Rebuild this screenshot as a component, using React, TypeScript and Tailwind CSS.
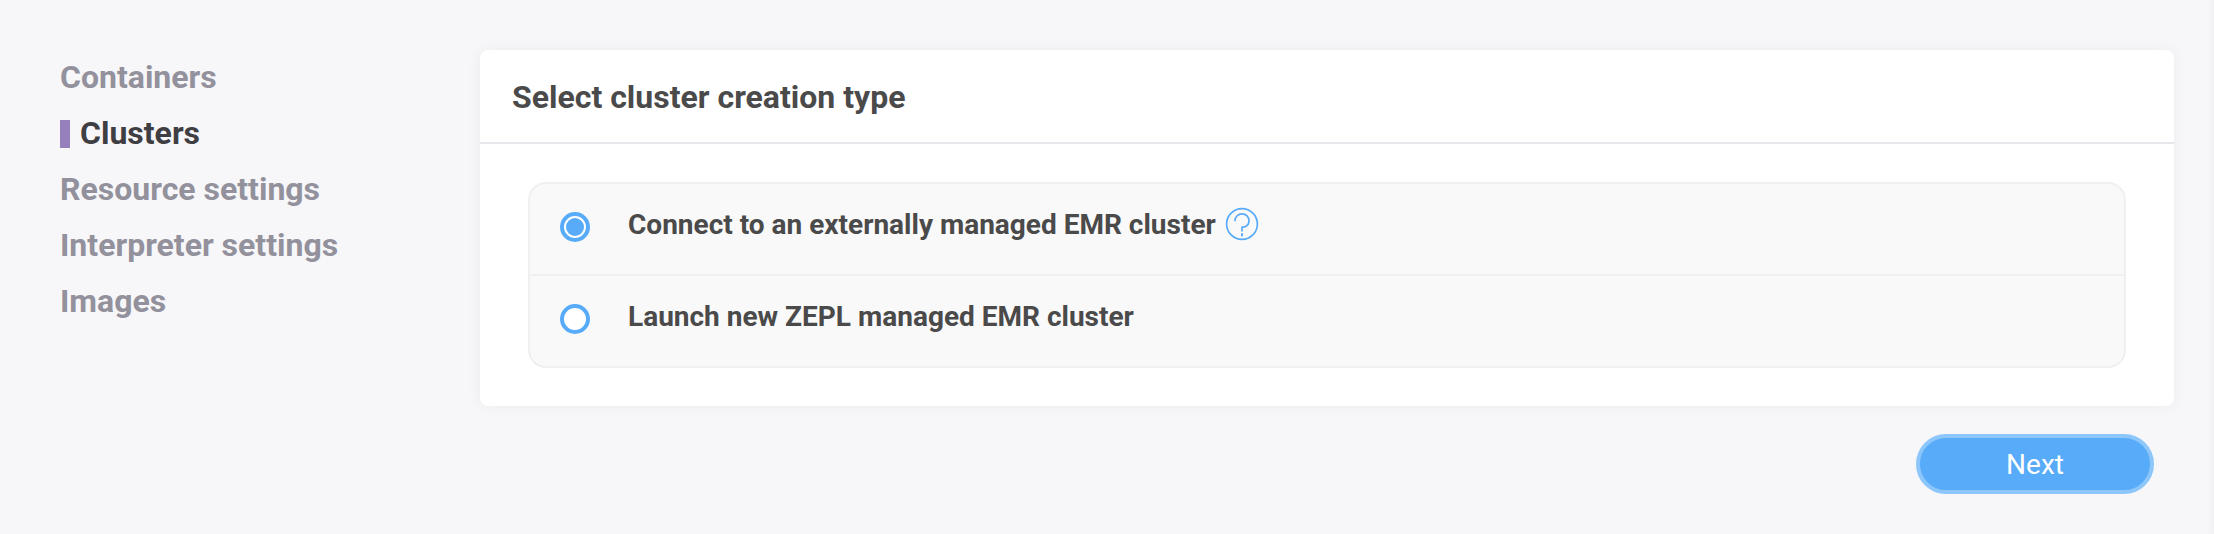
import { useState } from "react";

const navItems = ["Containers", "Clusters", "Resource settings", "Interpreter settings", "Images"];

const options = [
  { label: "Connect to an externally managed EMR cluster", help: true },
  { label: "Launch new ZEPL managed EMR cluster", help: false },
];

function HelpIcon() {
  return (
    <svg width="34" height="34" viewBox="0 0 34 34" fill="none" stroke="#57abf8" className="-mt-0.5 shrink-0">
      <circle cx="17" cy="17" r="15.4" strokeWidth="1.7" />
      <path d="M10 14.2V13.6a7 6.9 0 0 1 14 0.2c0 3.6-2.6 6.2-7 6.6v4" strokeWidth="1.7" />
      <path d="M17 26.2v3" strokeWidth="2" />
    </svg>
  );
}

export default function App() {
  const [active, setActive] = useState("Clusters");
  const [selected, setSelected] = useState(0);

  return (
    <div className="flex h-[534px] w-[2214px] overflow-hidden bg-[#f7f7fa] font-['Roboto',sans-serif]">
      <nav className="w-[480px] shrink-0 pt-[49px] pl-[60px]">
        <ul>
          {navItems.map((item) => (
            <li
              key={item}
              onClick={() => setActive(item)}
              className={
                item === active
                  ? "flex h-14 cursor-pointer items-center text-[32px] font-bold text-[#3f3e42]"
                  : "flex h-14 cursor-pointer items-center text-[32px] font-bold text-[#92919c]"
              }
            >
              {item === active && <span className="mt-0.5 mr-2.5 h-7 w-2.5 bg-[#9580bb]" />}
              {item}
            </li>
          ))}
        </ul>
      </nav>
      <main className="w-[1694px] shrink-0 pt-[50px]">
        <section className="h-[356px] rounded-lg bg-white shadow-[0_0_16px_rgba(0,0,0,0.05)]">
          <header className="flex h-[94px] items-center border-b-2 border-[#e6e6eb] pt-0.5 pl-8">
            <h1 className="text-[32px] font-bold text-[#4a4a4a]">Select cluster creation type</h1>
          </header>
          <div className="px-12 pt-[38px]">
            <div className="h-[186px] divide-y-2 divide-[#f0f0f0] rounded-[18px] border-2 border-[#f0f0f0] bg-[#f9f9f9]">
              {options.map((option, i) => (
                <label key={option.label} className="flex h-[91px] cursor-pointer items-start pl-[30px] first:h-[92px]">
                  <input
                    type="radio"
                    name="cluster"
                    className="sr-only"
                    checked={selected === i}
                    onChange={() => setSelected(i)}
                  />
                  <span className="mt-7 flex size-[30px] items-center justify-center rounded-full border-4 border-[#57abf8] bg-white">
                    {selected === i && <span className="size-[18px] rounded-full bg-[#57abf8]" />}
                  </span>
                  <span className="mt-6 ml-[38px] flex h-[34px] items-center gap-[9px] text-[28px] font-bold text-[#4a4a4a]">
                    {option.label}
                    {option.help && <HelpIcon />}
                  </span>
                </label>
              ))}
            </div>
          </div>
        </section>
        <div className="flex justify-end pt-7 pr-5">
          <button className="h-[60px] w-[238px] rounded-full border-4 border-[#8cc6fa] bg-[#57abf8] pt-0.5 text-[28px] text-white">
            Next
          </button>
        </div>
      </main>
      <div className="ml-auto w-2 bg-linear-to-r from-[#f7f7fa] to-[#f1f1f4]" />
    </div>
  );
}
